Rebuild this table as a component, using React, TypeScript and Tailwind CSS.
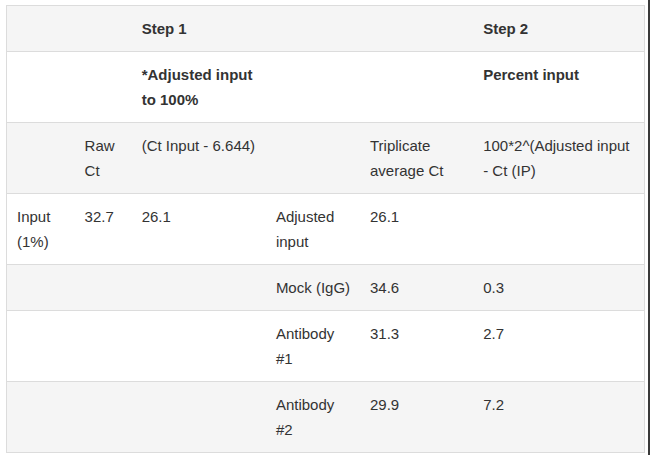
import React from 'react';

type Row = { cells: React.ReactNode[]; bold?: boolean };

const rows: Row[] = [
  { bold: true, cells: ['', '', 'Step 1', '', '', 'Step 2'] },
  { bold: true, cells: ['', '', <>*Adjusted input<br />to 100%</>, '', '', 'Percent input'] },
  {
    cells: [
      '',
      <>Raw<br />Ct</>,
      '(Ct Input - 6.644)',
      '',
      <>Triplicate<br />average Ct</>,
      <>100*2^(Adjusted input<br />- Ct (IP)</>,
    ],
  },
  { cells: [<>Input<br />(1%)</>, '32.7', '26.1', <>Adjusted<br />input</>, '26.1', ''] },
  { cells: ['', '', '', 'Mock (IgG)', '34.6', '0.3'] },
  { cells: ['', '', '', <>Antibody<br />#1</>, '31.3', '2.7'] },
  { cells: ['', '', '', <>Antibody<br />#2</>, '29.9', '7.2'] },
];

const widths = ['w-[68px]', 'w-[57px]', 'w-[134px]', 'w-[94px]', 'w-[113px]', 'w-[171px]'];

export default function App() {
  return (
    <div className="w-[650px] h-[455px] bg-white border-r-2 border-[#3a3a3a] overflow-hidden pl-[6px] pt-[5px]">
      <table
        className="w-[639px] table-fixed border-collapse border border-[#dcdcdc] text-[15px] leading-[25px] text-[#333]"
        style={{ fontFamily: '"Liberation Sans", Arial, sans-serif' }}
      >
        <colgroup>
          {widths.map((w, i) => (
            <col key={i} className={w} />
          ))}
        </colgroup>
        <tbody>
          {rows.map((row, r) => (
            <tr key={r} className={r % 2 === 0 ? 'bg-[#f5f5f5]' : 'bg-white'}>
              {row.cells.map((c, i) => (
                <td
                  key={i}
                  className={`align-top border-t border-[#dcdcdc] px-[10px] py-[10px] whitespace-nowrap ${row.bold ? 'font-bold' : ''}`}
                >
                  {c}
                </td>
              ))}
            </tr>
          ))}
        </tbody>
      </table>
    </div>
  );
}
